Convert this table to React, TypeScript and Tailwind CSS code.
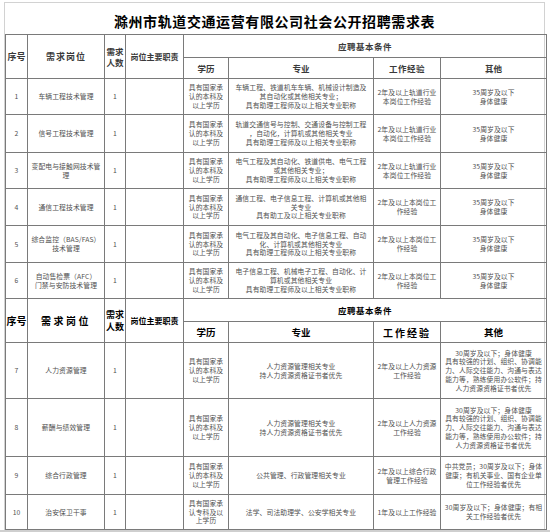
const cell =
  "border border-[#7a7a7a] text-center align-middle text-[6.8px] leading-[8.7px] text-[#505050] tracking-[0.1px] px-0";
const h1 =
  "border border-[#7a7a7a] text-center align-middle font-semibold text-[#3a3a3a]";
const h2 =
  "border border-[#7a7a7a] text-center align-middle font-bold text-black";

interface Row {
  no: string;
  post: string[];
  edu: string[];
  major: string[];
  exp: string[];
  other: string[];
  h: string;
}

const eduBk = ["具有国家承", "认的本科及", "以上学历"];
const hrOther = [
  "30周岁及以下；身体健康",
  "具有较强的计划、组织、协调能",
  "力、人际交往能力、沟通与表达",
  "能力等，熟练使用办公软件；持",
  "人力资源资格证书者优先",
];

const top: Row[] = [
  {
    no: "1",
    post: ["车辆工程技术管理"],
    edu: eduBk,
    major: ["车辆工程、铁道机车车辆、机械设计制造及", "其自动化或其他相关专业；", "具有助理工程师及以上相关专业职称"],
    exp: ["2年及以上轨道行业", "本岗位工作经验"],
    other: ["35周岁及以下", "身体健康"],
    h: "h-[36px]",
  },
  {
    no: "2",
    post: ["信号工程技术管理"],
    edu: eduBk,
    major: ["轨道交通信号与控制、交通设备与控制工程", "，自动化，计算机或其他相关专业", "具有助理工程师及以上相关专业职称"],
    exp: ["2年及以上轨道行业", "本岗位工作经验"],
    other: ["35周岁及以下", "身体健康"],
    h: "h-[38px]",
  },
  {
    no: "3",
    post: ["变配电与接触网技术管", "理"],
    edu: eduBk,
    major: ["电气工程及其自动化、铁道供电、电气工程", "或其他相关专业；", "具有助理工程师及以上相关专业职称"],
    exp: ["2年及以上轨道行业", "本岗位工作经验"],
    other: ["35周岁及以下", "身体健康"],
    h: "h-[36px]",
  },
  {
    no: "4",
    post: ["通信工程技术管理"],
    edu: eduBk,
    major: ["通信工程、电子信息工程、计算机或其他相", "关专业", "具有助工及以上相关专业职称"],
    exp: ["2年及以上本岗位工", "作经验"],
    other: ["35周岁及以下", "身体健康"],
    h: "h-[37px]",
  },
  {
    no: "5",
    post: ["综合监控（BAS/FAS）", "技术管理"],
    edu: eduBk,
    major: ["电气工程及其自动化、电子信息工程、自动", "化、计算机或其他相关专业", "具有助理工程师及以上相关专业职称"],
    exp: ["2年及以上本岗位工", "作经验"],
    other: ["35周岁及以下", "身体健康"],
    h: "h-[37px]",
  },
  {
    no: "6",
    post: ["自动售检票（AFC）", "门禁与安防技术管理"],
    edu: eduBk,
    major: ["电子信息工程、机械电子工程、自动化、计", "算机或其他相关专业", "具有助理工程师及以上相关专业职称"],
    exp: ["2年及以上本岗位工", "作经验"],
    other: ["35周岁及以下", "身体健康"],
    h: "h-[36px]",
  },
];

const bottom: Row[] = [
  {
    no: "7",
    post: ["人力资源管理"],
    edu: eduBk,
    major: ["人力资源管理相关专业", "持人力资源资格证书者优先"],
    exp: ["2年及以上人力资源", "工作经验"],
    other: hrOther,
    h: "h-[56px]",
  },
  {
    no: "8",
    post: ["薪酬与绩效管理"],
    edu: eduBk,
    major: ["人力资源管理相关专业", "持人力资源资格证书者优先"],
    exp: ["2年及以上人力资源", "工作经验"],
    other: hrOther,
    h: "h-[58px]",
  },
  {
    no: "9",
    post: ["综合行政管理"],
    edu: ["具有国家承", "认的本科及", "以上学历"],
    major: ["公共管理、行政管理相关专业"],
    exp: ["2年及以上综合行政", "管理工作经验"],
    other: ["中共党员；30周岁及以下；身体", "健康；有机关事业、国有企业单", "位工作经验者优先"],
    h: "h-[38px]",
  },
  {
    no: "10",
    post: ["治安保卫干事"],
    edu: ["具有国家承", "认专科及以", "上学历"],
    major: ["法学、司法助理学、公安学相关专业"],
    exp: ["1年及以上工作经验"],
    other: ["30周岁及以下；身体健康；有相", "关工作经验者优先"],
    h: "h-[35px]",
  },
];

function Lines({ lines }: { lines: string[] }) {
  return (
    <>
      {lines.map((l, i) => (
        <div key={i} className="whitespace-nowrap">
          {l}
        </div>
      ))}
    </>
  );
}

function DataRow({ r }: { r: Row }) {
  return (
    <tr className={r.h}>
      <td className={cell}>{r.no}</td>
      <td className={cell}>
        <Lines lines={r.post} />
      </td>
      <td className={cell}>1</td>
      <td className={cell}></td>
      <td className={cell}>
        <Lines lines={r.edu} />
      </td>
      <td className={cell}>
        <Lines lines={r.major} />
      </td>
      <td className={cell}>
        <Lines lines={r.exp} />
      </td>
      <td className={cell}>
        <Lines lines={r.other} />
      </td>
    </tr>
  );
}

function Header({ strong }: { strong?: boolean }) {
  const c = strong ? h2 : h1;
  return (
    <>
      <tr className="h-[23px]">
        <td rowSpan={2} className={`${c} ${strong ? "text-[10px]" : "text-[9px]"}`}>序号</td>
        <td rowSpan={2} className={`${c} ${strong ? "text-[10px] tracking-[2.5px]" : "text-[9px] tracking-[1px]"}`}>需求岗位</td>
        <td rowSpan={2} className={`${c} ${strong ? "text-[9px] leading-[12px]" : "text-[8.5px] leading-[11px]"} px-0`}>
          <div>需求</div>
          <div>人数</div>
        </td>
        <td rowSpan={2} className={`${c} text-[8px] px-0`}>岗位主要职责</td>
        <td colSpan={4} className={`${c} text-[8.5px] tracking-[0.5px]`}>应聘基本条件</td>
      </tr>
      <tr className="h-[21px]">
        <td className={`${c} ${strong ? "text-[9.5px]" : "text-[8.5px]"}`}>学历</td>
        <td className={`${c} ${strong ? "text-[9.5px]" : "text-[8.5px]"}`}>专业</td>
        <td className={`${c} ${strong ? "text-[10px] tracking-[2px]" : "text-[8.5px] tracking-[0.5px]"}`}>工作经验</td>
        <td className={`${c} ${strong ? "text-[9.5px]" : "text-[8.5px]"}`}>其他</td>
      </tr>
    </>
  );
}

export default function App() {
  return (
    <div className="w-[550px] h-[532px] bg-white overflow-hidden font-['Noto_Sans_CJK_SC','Liberation_Sans',sans-serif]">
      <div className="ml-[4px] mt-[2px] w-[541px] border-t border-x border-[#d2d2d2]">
        <div className="h-[31px] flex items-center justify-center pt-[5px] text-[14px] font-bold tracking-[0.6px] text-black">
          滁州市轨道交通运营有限公司社会公开招聘需求表
        </div>
        <table className="w-[541px] table-fixed border-collapse">
          <colgroup>
            <col className="w-[22px]" />
            <col className="w-[77px]" />
            <col className="w-[21px]" />
            <col className="w-[58px]" />
            <col className="w-[45px]" />
            <col className="w-[145px]" />
            <col className="w-[67px]" />
            <col className="w-[106px]" />
          </colgroup>
          <tbody>
            <Header />
            {top.map((r) => (
              <DataRow key={r.no} r={r} />
            ))}
            <Header strong />
            {bottom.map((r) => (
              <DataRow key={r.no} r={r} />
            ))}
          </tbody>
        </table>
      </div>
      <div className="h-[6px] bg-[#cfcfcf]" />
    </div>
  );
}
